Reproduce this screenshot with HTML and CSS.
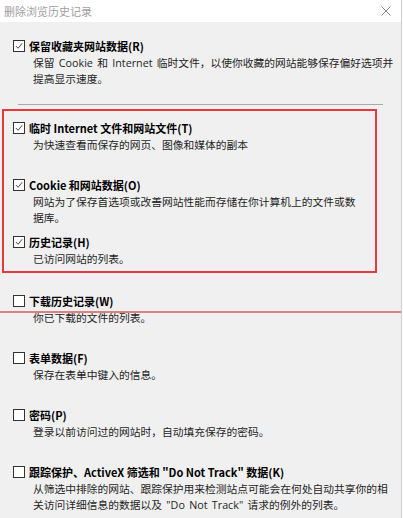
FILE: index.html
```html
<!DOCTYPE html>
<html lang="zh-CN">
<head>
<meta charset="utf-8">
<title>删除浏览历史记录</title>
<link rel="stylesheet" href="styles.css">
</head>
<body>
<div class="dialog">
  <div class="titlebar">
    <span class="title">删除浏览历史记录</span>
    <svg class="close" width="10" height="10" viewBox="0 0 10 10"><path d="M0.5 0.5 L9.5 9.5 M9.5 0.5 L0.5 9.5" stroke="#8a8a8a" stroke-width="1" fill="none"/></svg>
  </div>
  <div class="content">
    <div class="item first">
      <div class="row"><span class="cb"><svg viewBox="0 0 11 11" width="11" height="11"><polyline points="2,5.5 4.5,8 9,2.5" fill="none" stroke="#333" stroke-width="1"/></svg></span><span class="label">保留收藏夹网站数据(R)</span></div>
      <div class="desc">保留 Cookie 和 Internet 临时文件，以使你收藏的网站能够保存偏好选项并<br>提高显示速度。</div>
    </div>
    <div class="sep"></div>
    <div class="item">
      <div class="row"><span class="cb"><svg viewBox="0 0 11 11" width="11" height="11"><polyline points="2,5.5 4.5,8 9,2.5" fill="none" stroke="#333" stroke-width="1"/></svg></span><span class="label">临时 Internet 文件和网站文件(T)</span></div>
      <div class="desc">为快速查看而保存的网页、图像和媒体的副本</div>
    </div>
    <div class="item">
      <div class="row"><span class="cb"><svg viewBox="0 0 11 11" width="11" height="11"><polyline points="2,5.5 4.5,8 9,2.5" fill="none" stroke="#333" stroke-width="1"/></svg></span><span class="label">Cookie 和网站数据(O)</span></div>
      <div class="desc">网站为了保存首选项或改善网站性能而存储在你计算机上的文件或数<br>据库。</div>
    </div>
    <div class="item tall">
      <div class="row"><span class="cb"><svg viewBox="0 0 11 11" width="11" height="11"><polyline points="2,5.5 4.5,8 9,2.5" fill="none" stroke="#333" stroke-width="1"/></svg></span><span class="label">历史记录(H)</span></div>
      <div class="desc">已访问网站的列表。</div>
    </div>
    <div class="item">
      <div class="row"><span class="cb"></span><span class="label">下载历史记录(W)</span></div>
      <div class="desc">你已下载的文件的列表。</div>
    </div>
    <div class="item">
      <div class="row"><span class="cb"></span><span class="label">表单数据(F)</span></div>
      <div class="desc">保存在表单中键入的信息。</div>
    </div>
    <div class="item">
      <div class="row"><span class="cb"></span><span class="label">密码(P)</span></div>
      <div class="desc">登录以前访问过的网站时，自动填充保存的密码。</div>
    </div>
    <div class="item">
      <div class="row"><span class="cb"></span><span class="label">跟踪保护、ActiveX 筛选和 "Do Not Track" 数据(K)</span></div>
      <div class="desc">从筛选中排除的网站、跟踪保护用来检测站点可能会在何处自动共享你的相<br>关访问详细信息的数据以及 "Do Not Track" 请求的例外的列表。</div>
    </div>
  </div>
  <div class="annot-box"></div>
  <div class="annot-line"></div>
</div>
</body>
</html>
```

FILE: styles.css
```css
html, body {
  margin: 0;
  padding: 0;
  background: #ffffff;
}
.dialog {
  position: relative;
  width: 401px;
  height: 518px;
  overflow: hidden;
  background: #f0f0f0;
  border-right: 1px solid #cdcdcd;
  font-family: "Noto Sans CJK SC", "Noto Sans", sans-serif;
}
.titlebar {
  height: 22px;
  background: #ffffff;
  display: flex;
  align-items: center;
  justify-content: space-between;
  padding: 0 10px 0 4px;
}
.title {
  font-size: 11px;
  color: #a0a0a0;
  line-height: 22px;
}
.close {
  display: block;
}
.content {
  padding: 15px 0 0 13px;
}
.item {
  height: 57px;
}
.item.tall {
  height: 59px;
}
.item.first {
  height: auto;
}
.row {
  display: flex;
  align-items: center;
  gap: 4px;
  height: 18px;
}
.cb {
  display: block;
  box-sizing: border-box;
  width: 12px;
  height: 12px;
  border: 1px solid #333333;
  background: #ffffff;
  flex: none;
}
.cb svg {
  display: block;
  width: 10px;
  height: 10px;
}
.label {
  font-size: 11px;
  font-weight: bold;
  color: #000000;
  line-height: 18px;
  white-space: nowrap;
}
.desc {
  margin-left: 20px;
  font-family: "Open Sans", "Noto Sans CJK SC", sans-serif;
  font-size: 10.75px;
  line-height: 16px;
  word-spacing: 1.5px;
  color: #1e1e1e;
  white-space: nowrap;
}
.sep {
  margin: 17px 0 14px 5px;
  width: 365px;
  height: 1px;
  background: #a8a8a8;
}
.annot-box {
  position: absolute;
  left: 2px;
  top: 109px;
  width: 371px;
  height: 160px;
  border: 2px solid #e8383d;
}
.annot-line {
  position: absolute;
  left: 0;
  top: 311px;
  width: 403px;
  height: 2px;
  background: #dc8080;
}
```
